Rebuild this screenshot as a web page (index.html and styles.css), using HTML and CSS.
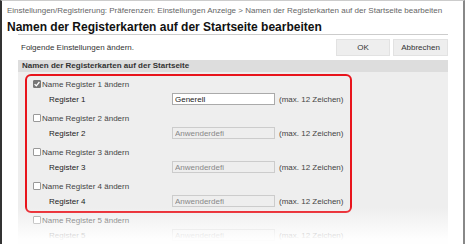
FILE: index.html
```
<!DOCTYPE html>
<html lang="de">
<head>
    <meta charset="UTF-8">
    <title>Namen der Registerkarten auf der Startseite bearbeiten</title>
    <link rel="stylesheet" href="styles.css">
</head>
<body>
    <div class="frame">
        <div class="breadcrumb">Einstellungen/Registrierung: Präferenzen: Einstellungen Anzeige &gt; Namen der Registerkarten auf der Startseite bearbeiten</div>
        <h1>Namen der Registerkarten auf der Startseite bearbeiten</h1>

        <div class="content">
            <div class="toolbar">
                <span>Folgende Einstellungen ändern.</span>
                <div class="buttons">
                    <button class="ok">OK</button>
                    <button>Abbrechen</button>
                </div>
            </div>

            <div class="section-title">Namen der Registerkarten auf der Startseite</div>
            <div class="section-body">
                <div class="highlight">
                    <div class="item">
                        <label class="check"><span class="box checked"><svg width="6" height="6" viewBox="0 0 6 6"><path d="M0.6 3.1 L2.3 4.8 L5.4 1" fill="none" stroke="#fff" stroke-width="1.3"/></svg></span>Name Register 1 ändern</label>
                        <div class="field">
                            <span class="field-label">Register 1</span>
                            <input type="text" value="Generell">
                            <span class="hint">(max. 12 Zeichen)</span>
                        </div>
                    </div>
                    <div class="item">
                        <label class="check"><span class="box"></span>Name Register 2 ändern</label>
                        <div class="field">
                            <span class="field-label">Register 2</span>
                            <input type="text" value="Anwenderdefi" disabled>
                            <span class="hint">(max. 12 Zeichen)</span>
                        </div>
                    </div>
                    <div class="item">
                        <label class="check"><span class="box"></span>Name Register 3 ändern</label>
                        <div class="field">
                            <span class="field-label">Register 3</span>
                            <input type="text" value="Anwenderdefi" disabled>
                            <span class="hint">(max. 12 Zeichen)</span>
                        </div>
                    </div>
                    <div class="item">
                        <label class="check"><span class="box"></span>Name Register 4 ändern</label>
                        <div class="field">
                            <span class="field-label">Register 4</span>
                            <input type="text" value="Anwenderdefi" disabled>
                            <span class="hint">(max. 12 Zeichen)</span>
                        </div>
                    </div>
                </div>
                <div class="item outside">
                    <label class="check"><span class="box"></span>Name Register 5 ändern</label>
                    <div class="field">
                        <span class="field-label">Register 5</span>
                        <input type="text" value="Anwenderdefi" disabled>
                        <span class="hint">(max. 12 Zeichen)</span>
                    </div>
                </div>
            </div>
        </div>
        <div class="fade"></div>
    </div>
</body>
</html>
```
FILE: styles.css
```
body {
    margin: 0;
    background-color: white;
    font-family: "Liberation Sans", Arial, sans-serif;
    color: #222;
    overflow: hidden;
}

.frame {
    position: relative;
    width: 465px;
    height: 244px;
    border-left: 2px solid #333;
    border-top: 1px solid #ccc;
    border-right: 2px solid #888;
    padding-left: 5px;
    box-sizing: border-box;
    overflow: hidden;
}

.breadcrumb {
    font-size: 8px;
    line-height: 10px;
    color: #666;
    margin-top: 5px;
    white-space: nowrap;
}

h1 {
    font-size: 12px;
    line-height: 14px;
    font-weight: bold;
    color: #111;
    margin: 4px 0 0 0;
}

.content {
    margin-left: 11px;
    width: 430px;
    border-top: 1px solid #ccc;
}

.toolbar {
    display: flex;
    justify-content: space-between;
    align-items: center;
    margin-top: 4px;
    margin-bottom: 4px;
    font-size: 8px;
    color: #333;
}

.toolbar span {
    padding-left: 3px;
}

.buttons {
    display: flex;
    gap: 3px;
}

button {
    font-family: "Liberation Sans", Arial, sans-serif;
    font-size: 8px;
    color: #333;
    background-color: #eee;
    border: 1px solid #e2e2e2;
    height: 17px;
    width: 55px;
    padding: 0;
}

button.ok {
    width: 54px;
}

.section-title {
    background-color: #ddd;
    font-size: 8px;
    font-weight: bold;
    color: #333;
    padding-left: 4px;
    height: 12px;
    line-height: 12px;
}

.section-body {
    background-color: #eee;
    padding: 2px 0 20px 7px;
}

.highlight {
    width: 327px;
    box-sizing: border-box;
    border: 2px solid #e8141c;
    border-radius: 6px;
    padding: 3px 0 4px 6px;
}

.item {
    font-size: 8px;
    margin-bottom: 8px;
}

.highlight .item:last-child {
    margin-bottom: 0;
}

.check {
    display: flex;
    align-items: center;
    height: 10px;
    color: #444;
}

.box {
    display: inline-flex;
    align-items: center;
    justify-content: center;
    width: 8px;
    height: 8px;
    box-sizing: border-box;
    border: 1px solid #999;
    border-radius: 1px;
    background-color: white;
    margin-right: 1px;
}

.box.checked {
    background-color: #777;
    border-color: #777;
}

.field {
    display: flex;
    align-items: center;
    height: 12px;
    margin-top: 4px;
}

.field-label {
    width: 139px;
    padding-left: 16px;
    box-sizing: border-box;
    color: #222;
}

input {
    width: 103px;
    height: 12px;
    box-sizing: border-box;
    font-family: "Liberation Sans", Arial, sans-serif;
    font-size: 8px;
    padding: 0 2px;
    border: 1px solid #aaa;
    background-color: white;
    color: #222;
}

input:disabled {
    background-color: #eee;
    border-color: #ccc;
    color: #888;
}

.hint {
    margin-left: 4px;
    color: #444;
}

.outside {
    padding-left: 8px;
    margin-top: 2px;
}

.fade {
    position: absolute;
    left: -2px;
    right: -2px;
    top: 206px;
    height: 40px;
    background: linear-gradient(to bottom, rgba(255,255,255,0), rgba(255,255,255,0.95) 80%);
}
```
